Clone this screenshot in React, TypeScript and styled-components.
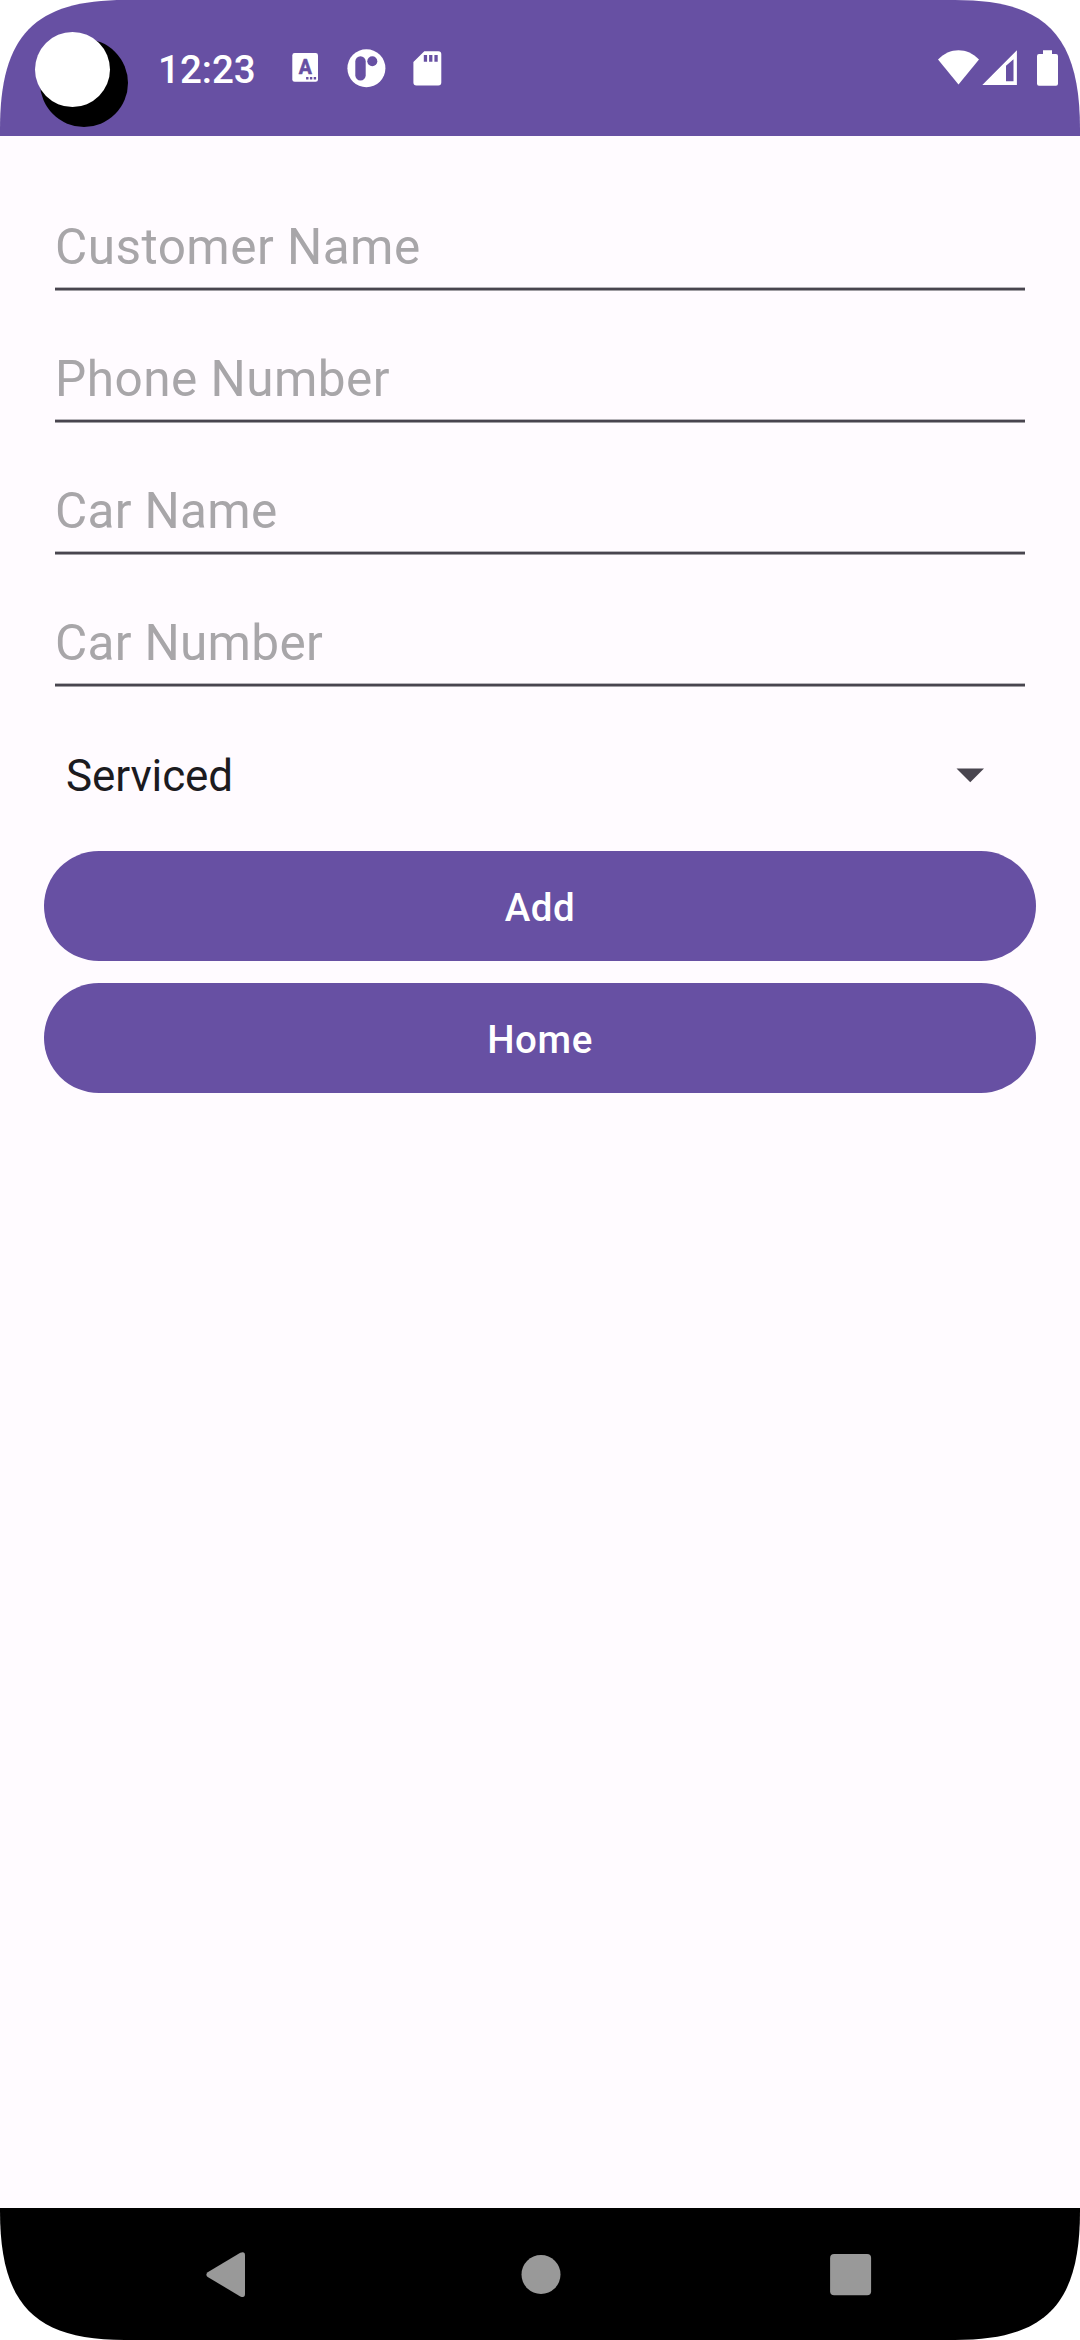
import React from "react";
import styled, { createGlobalStyle } from "styled-components";

const purple = "#6750a3";
const surface = "#fffbff";

const GlobalStyle = createGlobalStyle`
  html, body { margin: 0; padding: 0; background: #ffffff; }
  * { box-sizing: border-box; }
`;

const Device = styled.div`
  display: flex;
  flex-direction: column;
  width: 1080px;
  height: 2340px;
  overflow: hidden;
  background: ${surface};
  font-family: Roboto, "Noto Sans", sans-serif;
  clip-path: path("M0 129C0 35 35 0 125 0H955C1045 0 1080 35 1080 129V2211C1080 2305 1045 2340 955 2340H125C35 2340 0 2305 0 2211Z");
`;

const StatusBar = styled.header`
  display: flex;
  align-items: flex-start;
  justify-content: space-between;
  height: 136px;
  padding: 30px 20px 0 32px;
  background: ${purple};
  color: #ffffff;
`;

const StatusGroup = styled.div`
  display: flex;
  align-items: flex-start;
`;

const Glyph = styled.svg<{ $gap?: number }>`
  display: block;
  flex: none;
  margin-left: ${(p) => p.$gap ?? 0}px;
  fill: currentColor;
`;

const Clock = styled.time`
  width: 126px;
  margin-left: 26px;
  padding-top: 17px;
  font-size: 38.5px;
  line-height: 46px;
  font-weight: 500;
  white-space: nowrap;
`;

const Form = styled.form`
  display: flex;
  flex: 1;
  flex-direction: column;
  padding: 23px 44px 0;
`;

const Field = styled.label`
  display: flex;
  flex-direction: column;
  justify-content: flex-end;
  height: 132px;
  padding: 0 11px;
`;

const FieldInput = styled.input<{ $tracking: number }>`
  height: 58px;
  margin: 0 0 11px;
  padding: 0;
  border: 0;
  outline: 0;
  background: transparent;
  color: #1c1b1f;
  font: 400 49.5px/58px Roboto, "Noto Sans", sans-serif;
  letter-spacing: ${(p) => p.$tracking}px;
  &::placeholder {
    color: #a8a6a9;
    opacity: 1;
  }
`;

const Underline = styled.span`
  height: 4px;
  background: linear-gradient(#b7b5ba 0 1px, #49454f 1px 3px, #a09ea3 3px 4px);
`;

const Spinner = styled.div`
  display: flex;
  align-items: center;
  justify-content: space-between;
  height: 142px;
  margin-bottom: 22px;
  padding: 36px 50px 0 22px;
  color: #1c1b1f;
  font-size: 44px;
  line-height: 52px;
  letter-spacing: -0.12px;
`;

const DropdownArrow = styled.svg`
  display: block;
  margin-bottom: 2px;
  fill: #49454f;
`;

const Button = styled.button`
  height: 110px;
  margin: 0 0 22px;
  padding: 4px 0 0;
  border: 0;
  border-radius: 55px;
  background: ${purple};
  color: #ffffff;
  font: 500 38.5px/46px Roboto, "Noto Sans", sans-serif;
  letter-spacing: 0.6px;
`;

const NavBar = styled.nav`
  display: flex;
  align-items: center;
  justify-content: space-between;
  height: 132px;
  padding: 2px 204px 0 201px;
  background: #000000;
  color: #999999;
`;

const fields = [
  { name: "Customer Name", tracking: 0.47 },
  { name: "Phone Number", tracking: 0.47 },
  { name: "Car Name", tracking: 0.3 },
  { name: "Car Number", tracking: 0.3 },
];

export default function App() {
  return (
    <>
      <GlobalStyle />
      <Device>
        <StatusBar>
          <StatusGroup>
            <Glyph width="100" height="100" viewBox="32 30 100 100">
              <circle cx="84" cy="83" r="44" fill="#000" />
              <circle cx="72.5" cy="69.5" r="37.5" />
            </Glyph>
            <Clock>12:23</Clock>
            <Glyph width="36" height="60" viewBox="288 30 36 60" $gap={4}>
              <rect x="292.3" y="53" width="25.7" height="28.8" rx="2.4" />
              <text x="305.3" y="73.9" textAnchor="middle" fontSize="19.5" fontWeight="700" fill={purple} stroke={purple} strokeWidth="0.6" strokeLinejoin="round">A</text>
              <path fill={purple} d="M306.1 77h2.4v2.6h-2.4zM309.9 77h2.4v2.6h-2.4zM313.7 77h2.4v2.6h-2.4z" />
            </Glyph>
            <Glyph width="44" height="60" viewBox="344 30 44 60" $gap={20}>
              <circle cx="366.4" cy="68.3" r="19" />
              <rect x="355.3" y="56.2" width="10.4" height="24.2" rx="5.2" fill={purple} />
              <circle cx="372.3" cy="61.3" r="5" fill={purple} />
            </Glyph>
            <Glyph width="36" height="60" viewBox="410 30 36 60" $gap={22}>
              <path
                fillRule="evenodd"
                d="M424.3 51.2H438.3a3 3 0 0 1 3 3V82.6a3 3 0 0 1-3 3H416.4a3 3 0 0 1-3-3V62ZM423.8 55v6.7h3.3V55ZM429.1 55v6.7h3.3V55ZM434.4 55v6.7h3.3V55Z"
              />
            </Glyph>
          </StatusGroup>
          <StatusGroup>
            <Glyph width="44" height="60" viewBox="936 30 44 60">
              <path d="M938 59.6C949.5 47.1 967.5 47.1 979 59.6L958.5 84.6Z" />
            </Glyph>
            <Glyph width="40" height="60" viewBox="980 30 40 60">
              <path fillRule="evenodd" d="M982.3 84.9L1016.9 50.3V84.9ZM1006 65.8V81.2H1013.5V59.2Z" />
            </Glyph>
            <Glyph width="26" height="60" viewBox="1034 30 26 60" $gap={14}>
              <path d="M1043 50.3H1052V54H1056a2 2 0 0 1 2 2V83.7a2 2 0 0 1-2 2H1039a2 2 0 0 1-2-2V56a2 2 0 0 1 2-2H1043Z" />
            </Glyph>
          </StatusGroup>
        </StatusBar>

        <Form onSubmit={(e) => e.preventDefault()}>
          {fields.map(({ name, tracking }) => (
            <Field key={name}>
              <FieldInput placeholder={name} $tracking={tracking} />
              <Underline />
            </Field>
          ))}
          <Spinner>
            <span>Serviced</span>
            <DropdownArrow width="32" height="20" viewBox="954 765 32 20">
              <path d="M956.5 768.5H984L970.25 782.2Z" />
            </DropdownArrow>
          </Spinner>
          <Button type="submit">Add</Button>
          <Button type="button">Home</Button>
        </Form>

        <NavBar>
          <Glyph width="50" height="50" viewBox="201 2250 50 50">
            <path d="M207.7 2272.3L240.3 2252.8Q245 2251 245 2255.4V2294Q245 2298.4 240.3 2296.4L207.7 2277Q205 2274.6 207.7 2272.3Z" />
          </Glyph>
          <Glyph width="50" height="50" viewBox="515.5 2250 50 50" $gap={4}>
            <circle cx="540.5" cy="2274.5" r="19.5" />
          </Glyph>
          <Glyph width="50" height="50" viewBox="826 2250 50 50">
            <rect x="830.1" y="2254" width="41" height="41.3" rx="4" />
          </Glyph>
        </NavBar>
      </Device>
    </>
  );
}
